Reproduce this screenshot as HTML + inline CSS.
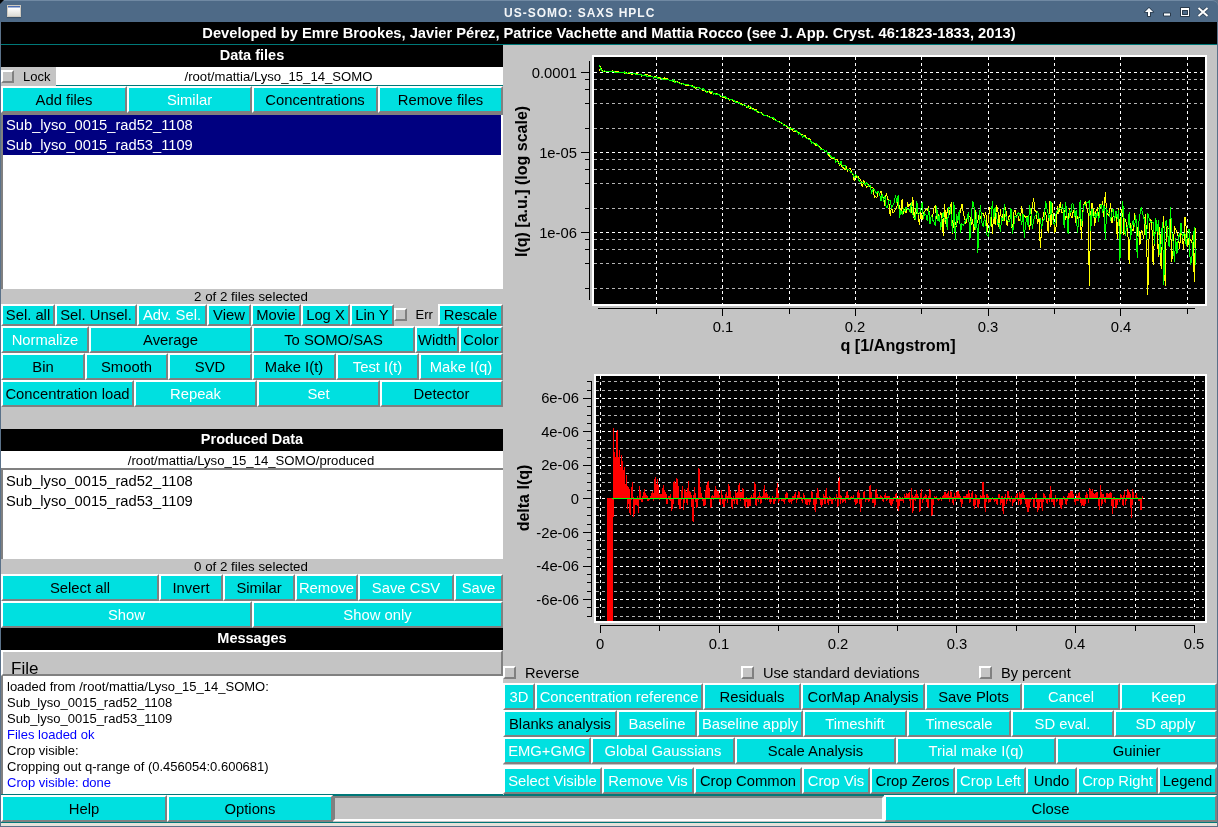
<!DOCTYPE html><html><head><meta charset="utf-8"><style>
*{margin:0;padding:0}
html,body{width:1218px;height:827px;overflow:hidden;background:#c4c4c4}
body{position:relative;font-family:"Liberation Sans",sans-serif}
div,svg{position:absolute}
.t{white-space:nowrap}
.c{white-space:nowrap;text-align:center;overflow:hidden}
.b{background:#00e0e0;border-style:solid;border-width:2px;border-color:#fff #808080 #808080 #fff;text-align:center;white-space:nowrap;overflow:hidden}
.cb{width:9px;height:9px;background:#c4c4c4;border-style:solid;border-width:2px;border-color:#fff #808080 #808080 #fff}
.lst{background:#fff;box-sizing:border-box;border-style:solid;border-width:2px 0 0 2px;border-color:#808080}
.mb{background:#c4c4c4;box-sizing:border-box;border-style:solid;border-width:2px;border-color:#fff #808080 #808080 #fff;overflow:hidden}
.ta{background:#fff;box-sizing:border-box;border-style:solid;border-width:0 0 0 2px;border-color:#808080}
.pb{background:#c4c4c4;box-sizing:border-box;border-style:solid;border-width:2px;border-color:#808080 #fff #fff #808080}
</style></head><body><div id="root" style="left:0;top:0;width:1218px;height:827px;overflow:hidden;will-change:transform;background:#c4c4c4"><div style="left:0px;top:0px;width:1218px;height:827px;background:#5a7189;"></div><div style="left:1px;top:22px;width:1216px;height:804px;background:#c4c4c4;"></div><div style="left:0;top:0;width:1218px;height:22px;background:#4e6a87;border-top:1px solid #7089a3;box-sizing:border-box;border-radius:4px 6px 0 0"></div><div style="left:7px;top:5px;width:14px;height:12px;background:linear-gradient(#4a6cb0 0,#4a6cb0 1px,#ffffff 2px,#f6f6f4 40%,#dcdcd6 100%);border:1px solid #cfcac0;box-sizing:border-box;box-shadow:0 1px 1px rgba(30,40,50,0.35)"></div><div style="left:0;top:0;width:4px;height:4px;background:linear-gradient(135deg,#000 0,#000 45%,transparent 55%)"></div><div class="t" style="left:504px;top:1px;font-size:12px;color:#f4f6f8;font-weight:bold;line-height:24px;letter-spacing:1px">US-SOMO: SAXS HPLC</div><svg style="left:1135px;top:0px" width="80" height="22" viewBox="0 0 80 22">
<g fill="none" stroke="#243240" stroke-width="1" stroke-linejoin="round" opacity="0.85">
<path d="M14 7.3 L18.7 12.2 L15.5 12.2 L15.5 16.5 L12.5 16.5 L12.5 12.2 L9.3 12.2 Z"/>
<rect x="28.5" y="13" width="7" height="3"/>
<path d="M45.5 7.5 H54.5 V16.5 H45.5 Z M47.5 10.5 V14.5 H52.5 V10.5 Z"/>
</g>
<path d="M63.5 8 L72.5 16 M72.5 8 L63.5 16" stroke="#243240" stroke-width="3.4" fill="none" opacity="0.7"/>
<g fill="#ffffff">
<path d="M14 8 L18 12 L15 12 L15 16 L13 16 L13 12 L10 12 Z"/>
<rect x="29" y="13.5" width="6" height="2"/>
<path d="M46 8 H54 V16 H46 Z M47 10 V15 H53 V10 Z" fill-rule="evenodd"/>
<path d="M63.5 8 L72.5 16 M72.5 8 L63.5 16" stroke="#fff" stroke-width="2" fill="none"/>
</g></svg><div style="left:1px;top:22px;width:1216px;height:22px;background:#000;"></div><div class="c" style="left:1px;top:22px;width:1216px;height:22px;line-height:22px;font-size:14.7px;color:#fff;font-weight:bold;">Developed by Emre Brookes, Javier P&eacute;rez, Patrice Vachette and Mattia Rocco (see J. App. Cryst. 46:1823-1833, 2013)</div><div style="left:1px;top:44px;width:1216px;height:1px;background:#007878;"></div><div style="left:1px;top:45px;width:502px;height:22px;background:#000;"></div><div class="c" style="left:1px;top:44px;width:502px;height:22px;line-height:22px;font-size:14.5px;color:#fff;font-weight:bold;">Data files</div><div style="left:56px;top:67px;width:447px;height:18px;background:#fff;"></div><div style="left:56px;top:85px;width:447px;height:1px;background:#007878;"></div><div class="cb" style="left:1px;top:70px"></div><div class="t" style="left:23px;top:67px;font-size:13px;color:#000;line-height:19px">Lock</div><div class="c" style="left:55px;top:68px;width:447px;height:18px;line-height:18px;font-size:13.15px;color:#000;">/root/mattia/Lyso_15_14_SOMO</div><div class="b" style="left:1px;top:86px;width:122px;height:23px;line-height:25px;color:#000000;font-size:14.8px">Add files</div><div class="b" style="left:127px;top:86px;width:121px;height:23px;line-height:25px;color:#ffffff;font-size:14.8px">Similar</div><div class="b" style="left:252px;top:86px;width:122px;height:23px;line-height:25px;color:#000000;font-size:14.8px">Concentrations</div><div class="b" style="left:378px;top:86px;width:121px;height:23px;line-height:25px;color:#000000;font-size:14.8px">Remove files</div><div class="lst" style="left:1px;top:113px;width:502px;height:176px"></div><div style="left:3px;top:115px;width:498px;height:40px;background:#000080;"></div><div class="t" style="left:6px;top:115px;font-size:14.7px;color:#fff;line-height:20px">Sub_lyso_0015_rad52_1108</div><div class="t" style="left:6px;top:135px;font-size:14.7px;color:#fff;line-height:20px">Sub_lyso_0015_rad53_1109</div><div class="c" style="left:0px;top:289px;width:502px;height:15px;line-height:15px;font-size:13.3px;color:#000;">2 of 2 files selected</div><div class="b" style="left:1px;top:304px;width:50px;height:18px;line-height:18px;color:#000000;font-size:14.8px">Sel. all</div><div class="b" style="left:55px;top:304px;width:78px;height:18px;line-height:18px;color:#000000;font-size:14.8px">Sel. Unsel.</div><div class="b" style="left:137px;top:304px;width:66px;height:18px;line-height:18px;color:#ffffff;font-size:14.8px">Adv. Sel.</div><div class="b" style="left:207px;top:304px;width:40px;height:18px;line-height:18px;color:#000000;font-size:14.8px">View</div><div class="b" style="left:251px;top:304px;width:46px;height:18px;line-height:18px;color:#000000;font-size:14.8px">Movie</div><div class="b" style="left:301px;top:304px;width:45px;height:18px;line-height:18px;color:#000000;font-size:14.8px">Log X</div><div class="b" style="left:350px;top:304px;width:40px;height:18px;line-height:18px;color:#000000;font-size:14.8px">Lin Y</div><div class="b" style="left:438px;top:304px;width:61px;height:18px;line-height:18px;color:#000000;font-size:14.8px">Rescale</div><div class="cb" style="left:394px;top:308px"></div><div class="t" style="left:415.5px;top:304px;font-size:13px;color:#000;line-height:22px">Err</div><div class="b" style="left:1px;top:326px;width:84px;height:23px;line-height:25px;color:#ffffff;font-size:14.8px">Normalize</div><div class="b" style="left:89px;top:326px;width:159px;height:23px;line-height:25px;color:#000000;font-size:14.8px">Average</div><div class="b" style="left:252px;top:326px;width:159px;height:23px;line-height:25px;color:#000000;font-size:14.8px">To SOMO/SAS</div><div class="b" style="left:415px;top:326px;width:40px;height:23px;line-height:25px;color:#000000;font-size:14.8px">Width</div><div class="b" style="left:459px;top:326px;width:40px;height:23px;line-height:25px;color:#000000;font-size:14.8px">Color</div><div class="b" style="left:1px;top:353px;width:80px;height:23px;line-height:25px;color:#000000;font-size:14.8px">Bin</div><div class="b" style="left:85px;top:353px;width:79px;height:23px;line-height:25px;color:#000000;font-size:14.8px">Smooth</div><div class="b" style="left:168px;top:353px;width:80px;height:23px;line-height:25px;color:#000000;font-size:14.8px">SVD</div><div class="b" style="left:252px;top:353px;width:80px;height:23px;line-height:25px;color:#000000;font-size:14.8px">Make I(t)</div><div class="b" style="left:336px;top:353px;width:79px;height:23px;line-height:25px;color:#ffffff;font-size:14.8px">Test I(t)</div><div class="b" style="left:419px;top:353px;width:80px;height:23px;line-height:25px;color:#ffffff;font-size:14.8px">Make I(q)</div><div class="b" style="left:1px;top:380px;width:129px;height:23px;line-height:25px;color:#000000;font-size:14.8px">Concentration load</div><div class="b" style="left:134px;top:380px;width:119px;height:23px;line-height:25px;color:#ffffff;font-size:14.8px">Repeak</div><div class="b" style="left:257px;top:380px;width:119px;height:23px;line-height:25px;color:#ffffff;font-size:14.8px">Set</div><div class="b" style="left:380px;top:380px;width:119px;height:23px;line-height:25px;color:#000000;font-size:14.8px">Detector</div><div style="left:1px;top:429px;width:502px;height:22px;background:#000;"></div><div class="c" style="left:1px;top:428px;width:502px;height:22px;line-height:22px;font-size:14.5px;color:#fff;font-weight:bold;">Produced Data</div><div style="left:1px;top:451px;width:502px;height:17px;background:#fff;"></div><div class="c" style="left:0px;top:452px;width:502px;height:17px;line-height:17px;font-size:13.15px;color:#000;">/root/mattia/Lyso_15_14_SOMO/produced</div><div class="lst" style="left:1px;top:468px;width:502px;height:91px"></div><div class="t" style="left:6px;top:471px;font-size:14.7px;color:#000;line-height:20px">Sub_lyso_0015_rad52_1108</div><div class="t" style="left:6px;top:491px;font-size:14.7px;color:#000;line-height:20px">Sub_lyso_0015_rad53_1109</div><div class="c" style="left:0px;top:559px;width:502px;height:15px;line-height:15px;font-size:13.3px;color:#000;">0 of 2 files selected</div><div class="b" style="left:1px;top:574px;width:154px;height:23px;line-height:25px;color:#000000;font-size:14.8px">Select all</div><div class="b" style="left:159px;top:574px;width:60px;height:23px;line-height:25px;color:#000000;font-size:14.8px">Invert</div><div class="b" style="left:223px;top:574px;width:68px;height:23px;line-height:25px;color:#000000;font-size:14.8px">Similar</div><div class="b" style="left:295px;top:574px;width:59px;height:23px;line-height:25px;color:#ffffff;font-size:14.8px">Remove</div><div class="b" style="left:358px;top:574px;width:92px;height:23px;line-height:25px;color:#ffffff;font-size:14.8px">Save CSV</div><div class="b" style="left:454px;top:574px;width:45px;height:23px;line-height:25px;color:#ffffff;font-size:14.8px">Save</div><div class="b" style="left:1px;top:601px;width:247px;height:23px;line-height:25px;color:#ffffff;font-size:14.8px">Show</div><div class="b" style="left:252px;top:601px;width:247px;height:23px;line-height:25px;color:#ffffff;font-size:14.8px">Show only</div><div style="left:1px;top:628px;width:502px;height:22px;background:#000;"></div><div class="c" style="left:1px;top:627px;width:502px;height:22px;line-height:22px;font-size:14.5px;color:#fff;font-weight:bold;">Messages</div><div class="mb" style="left:1px;top:650px;width:502px;height:26px"></div><div class="t" style="left:11px;top:659px;font-size:17px;color:#000;line-height:20px">File</div><div class="ta" style="left:1px;top:676px;width:502px;height:118px"></div><div class="t" style="left:7px;top:679px;font-size:13px;color:#000;line-height:16px">loaded from /root/mattia/Lyso_15_14_SOMO:</div><div class="t" style="left:7px;top:695px;font-size:13px;color:#000;line-height:16px">Sub_lyso_0015_rad52_1108</div><div class="t" style="left:7px;top:711px;font-size:13px;color:#000;line-height:16px">Sub_lyso_0015_rad53_1109</div><div class="t" style="left:7px;top:727px;font-size:13px;color:#0000ff;line-height:16px">Files loaded ok</div><div class="t" style="left:7px;top:743px;font-size:13px;color:#000;line-height:16px">Crop visible:</div><div class="t" style="left:7px;top:759px;font-size:13px;color:#000;line-height:16px">Cropping out q-range of (0.456054:0.600681)</div><div class="t" style="left:7px;top:775px;font-size:13px;color:#0000ff;line-height:16px">Crop visible: done</div><div style="left:1px;top:794px;width:1216px;height:2px;background:#007878;"></div><div class="b" style="left:1px;top:795px;width:162px;height:23px;line-height:25px;color:#000000;font-size:14.8px">Help</div><div class="b" style="left:167px;top:795px;width:162px;height:23px;line-height:25px;color:#000000;font-size:14.8px">Options</div><div class="pb" style="left:333px;top:796px;width:551px;height:25px"></div><div class="b" style="left:884px;top:795px;width:329px;height:23px;line-height:25px;color:#000000;font-size:14.8px">Close</div><div style="left:1px;top:822px;width:1216px;height:1px;background:#007878;"></div><div style="left:1px;top:823px;width:1216px;height:3px;background:#e6e2da;"></div><div style="left:503px;top:45px;width:1px;height:750px;background:#c4c4c4;"></div><div class="cb" style="left:503px;top:666px"></div><div class="t" style="left:525px;top:664px;font-size:14.6px;color:#000;line-height:18px">Reverse</div><div class="cb" style="left:741px;top:666px"></div><div class="t" style="left:763px;top:664px;font-size:14.6px;color:#000;line-height:18px">Use standard deviations</div><div class="cb" style="left:979px;top:666px"></div><div class="t" style="left:1001px;top:664px;font-size:14.6px;color:#000;line-height:18px">By percent</div><div class="b" style="left:503px;top:683px;width:28px;height:23px;line-height:25px;color:#ffffff;font-size:14.8px">3D</div><div class="b" style="left:535px;top:683px;width:164px;height:23px;line-height:25px;color:#ffffff;font-size:14.8px">Concentration reference</div><div class="b" style="left:703px;top:683px;width:94px;height:23px;line-height:25px;color:#000000;font-size:14.8px">Residuals</div><div class="b" style="left:801px;top:683px;width:120px;height:23px;line-height:25px;color:#000000;font-size:14.8px">CorMap Analysis</div><div class="b" style="left:925px;top:683px;width:93px;height:23px;line-height:25px;color:#000000;font-size:14.8px">Save Plots</div><div class="b" style="left:1022px;top:683px;width:94px;height:23px;line-height:25px;color:#ffffff;font-size:14.8px">Cancel</div><div class="b" style="left:1120px;top:683px;width:93px;height:23px;line-height:25px;color:#ffffff;font-size:14.8px">Keep</div><div class="b" style="left:503px;top:710px;width:110px;height:23px;line-height:25px;color:#000000;font-size:14.8px">Blanks analysis</div><div class="b" style="left:617px;top:710px;width:76px;height:23px;line-height:25px;color:#ffffff;font-size:14.8px">Baseline</div><div class="b" style="left:697px;top:710px;width:102px;height:23px;line-height:25px;color:#ffffff;font-size:14.8px">Baseline apply</div><div class="b" style="left:803px;top:710px;width:100px;height:23px;line-height:25px;color:#ffffff;font-size:14.8px">Timeshift</div><div class="b" style="left:907px;top:710px;width:100px;height:23px;line-height:25px;color:#ffffff;font-size:14.8px">Timescale</div><div class="b" style="left:1011px;top:710px;width:99px;height:23px;line-height:25px;color:#ffffff;font-size:14.8px">SD eval.</div><div class="b" style="left:1114px;top:710px;width:99px;height:23px;line-height:25px;color:#ffffff;font-size:14.8px">SD apply</div><div class="b" style="left:503px;top:737px;width:84px;height:23px;line-height:25px;color:#ffffff;font-size:14.8px">EMG+GMG</div><div class="b" style="left:591px;top:737px;width:140px;height:23px;line-height:25px;color:#ffffff;font-size:14.8px">Global Gaussians</div><div class="b" style="left:735px;top:737px;width:157px;height:23px;line-height:25px;color:#000000;font-size:14.8px">Scale Analysis</div><div class="b" style="left:896px;top:737px;width:156px;height:23px;line-height:25px;color:#ffffff;font-size:14.8px">Trial make I(q)</div><div class="b" style="left:1056px;top:737px;width:157px;height:23px;line-height:25px;color:#000000;font-size:14.8px">Guinier</div><div style="left:503px;top:765px;width:714px;height:2px;background:#fff;"></div><div class="b" style="left:503px;top:767px;width:95px;height:23px;line-height:25px;color:#ffffff;font-size:14.8px">Select Visible</div><div class="b" style="left:602px;top:767px;width:88px;height:23px;line-height:25px;color:#ffffff;font-size:14.8px">Remove Vis</div><div class="b" style="left:694px;top:767px;width:104px;height:23px;line-height:25px;color:#000000;font-size:14.8px">Crop Common</div><div class="b" style="left:802px;top:767px;width:64px;height:23px;line-height:25px;color:#ffffff;font-size:14.8px">Crop Vis</div><div class="b" style="left:870px;top:767px;width:81px;height:23px;line-height:25px;color:#000000;font-size:14.8px">Crop Zeros</div><div class="b" style="left:955px;top:767px;width:67px;height:23px;line-height:25px;color:#ffffff;font-size:14.8px">Crop Left</div><div class="b" style="left:1026px;top:767px;width:47px;height:23px;line-height:25px;color:#000000;font-size:14.8px">Undo</div><div class="b" style="left:1077px;top:767px;width:77px;height:23px;line-height:25px;color:#ffffff;font-size:14.8px">Crop Right</div><div class="b" style="left:1158px;top:767px;width:55px;height:23px;line-height:25px;color:#000000;font-size:14.8px">Legend</div><svg style="left:0;top:0" width="1218" height="827" viewBox="0 0 1218 827" shape-rendering="crispEdges"><rect x="593" y="56" width="613" height="249" fill="#000" stroke="#fff" stroke-width="2"/><line x1="656.5" y1="57" x2="656.5" y2="304" stroke="#ffffff" stroke-dasharray="3 3"/><line x1="656.5" y1="308" x2="656.5" y2="314" stroke="#000"/><line x1="722.5" y1="57" x2="722.5" y2="304" stroke="#ffffff" stroke-dasharray="3 3"/><line x1="722.5" y1="308" x2="722.5" y2="316" stroke="#000"/><line x1="789.5" y1="57" x2="789.5" y2="304" stroke="#ffffff" stroke-dasharray="3 3"/><line x1="789.5" y1="308" x2="789.5" y2="314" stroke="#000"/><line x1="855.5" y1="57" x2="855.5" y2="304" stroke="#ffffff" stroke-dasharray="3 3"/><line x1="855.5" y1="308" x2="855.5" y2="316" stroke="#000"/><line x1="921.5" y1="57" x2="921.5" y2="304" stroke="#ffffff" stroke-dasharray="3 3"/><line x1="921.5" y1="308" x2="921.5" y2="314" stroke="#000"/><line x1="988.5" y1="57" x2="988.5" y2="304" stroke="#ffffff" stroke-dasharray="3 3"/><line x1="988.5" y1="308" x2="988.5" y2="316" stroke="#000"/><line x1="1054.5" y1="57" x2="1054.5" y2="304" stroke="#ffffff" stroke-dasharray="3 3"/><line x1="1054.5" y1="308" x2="1054.5" y2="314" stroke="#000"/><line x1="1120.5" y1="57" x2="1120.5" y2="304" stroke="#ffffff" stroke-dasharray="3 3"/><line x1="1120.5" y1="308" x2="1120.5" y2="316" stroke="#000"/><line x1="1187.5" y1="57" x2="1187.5" y2="304" stroke="#ffffff" stroke-dasharray="3 3"/><line x1="1187.5" y1="308" x2="1187.5" y2="314" stroke="#000"/><line x1="594" y1="72.5" x2="1204" y2="72.5" stroke="#ffffff" stroke-dasharray="3 3"/><line x1="581" y1="72.5" x2="589" y2="72.5" stroke="#000"/><line x1="594" y1="79.5" x2="1204" y2="79.5" stroke="#b4b4b4" stroke-dasharray="3 3"/><line x1="585" y1="79.5" x2="589" y2="79.5" stroke="#000"/><line x1="594" y1="89.5" x2="1204" y2="89.5" stroke="#b4b4b4" stroke-dasharray="3 3"/><line x1="585" y1="89.5" x2="589" y2="89.5" stroke="#000"/><line x1="594" y1="103.5" x2="1204" y2="103.5" stroke="#b4b4b4" stroke-dasharray="3 3"/><line x1="585" y1="103.5" x2="589" y2="103.5" stroke="#000"/><line x1="594" y1="128.5" x2="1204" y2="128.5" stroke="#b4b4b4" stroke-dasharray="3 3"/><line x1="585" y1="128.5" x2="589" y2="128.5" stroke="#000"/><line x1="594" y1="152.5" x2="1204" y2="152.5" stroke="#ffffff" stroke-dasharray="3 3"/><line x1="581" y1="152.5" x2="589" y2="152.5" stroke="#000"/><line x1="594" y1="159.5" x2="1204" y2="159.5" stroke="#b4b4b4" stroke-dasharray="3 3"/><line x1="585" y1="159.5" x2="589" y2="159.5" stroke="#000"/><line x1="594" y1="169.5" x2="1204" y2="169.5" stroke="#b4b4b4" stroke-dasharray="3 3"/><line x1="585" y1="169.5" x2="589" y2="169.5" stroke="#000"/><line x1="594" y1="183.5" x2="1204" y2="183.5" stroke="#b4b4b4" stroke-dasharray="3 3"/><line x1="585" y1="183.5" x2="589" y2="183.5" stroke="#000"/><line x1="594" y1="208.5" x2="1204" y2="208.5" stroke="#b4b4b4" stroke-dasharray="3 3"/><line x1="585" y1="208.5" x2="589" y2="208.5" stroke="#000"/><line x1="594" y1="232.5" x2="1204" y2="232.5" stroke="#ffffff" stroke-dasharray="3 3"/><line x1="581" y1="232.5" x2="589" y2="232.5" stroke="#000"/><line x1="594" y1="239.5" x2="1204" y2="239.5" stroke="#b4b4b4" stroke-dasharray="3 3"/><line x1="585" y1="239.5" x2="589" y2="239.5" stroke="#000"/><line x1="594" y1="249.5" x2="1204" y2="249.5" stroke="#b4b4b4" stroke-dasharray="3 3"/><line x1="585" y1="249.5" x2="589" y2="249.5" stroke="#000"/><line x1="594" y1="263.5" x2="1204" y2="263.5" stroke="#b4b4b4" stroke-dasharray="3 3"/><line x1="585" y1="263.5" x2="589" y2="263.5" stroke="#000"/><line x1="594" y1="288.5" x2="1204" y2="288.5" stroke="#b4b4b4" stroke-dasharray="3 3"/><line x1="585" y1="288.5" x2="589" y2="288.5" stroke="#000"/><line x1="589.5" y1="61" x2="589.5" y2="300" stroke="#000"/><line x1="598" y1="308.5" x2="1195" y2="308.5" stroke="#000"/></svg><svg style="left:0;top:0" width="1218" height="827" viewBox="0 0 1218 827" shape-rendering="crispEdges"><rect x="595" y="375" width="611" height="247" fill="#000" stroke="#fff" stroke-width="2"/><line x1="600.5" y1="376" x2="600.5" y2="621" stroke="#ffffff" stroke-dasharray="3 3"/><line x1="600.5" y1="625" x2="600.5" y2="633" stroke="#000"/><line x1="659.5" y1="376" x2="659.5" y2="621" stroke="#ffffff" stroke-dasharray="3 3"/><line x1="659.5" y1="625" x2="659.5" y2="631" stroke="#000"/><line x1="719.5" y1="376" x2="719.5" y2="621" stroke="#ffffff" stroke-dasharray="3 3"/><line x1="719.5" y1="625" x2="719.5" y2="633" stroke="#000"/><line x1="778.5" y1="376" x2="778.5" y2="621" stroke="#ffffff" stroke-dasharray="3 3"/><line x1="778.5" y1="625" x2="778.5" y2="631" stroke="#000"/><line x1="838.5" y1="376" x2="838.5" y2="621" stroke="#ffffff" stroke-dasharray="3 3"/><line x1="838.5" y1="625" x2="838.5" y2="633" stroke="#000"/><line x1="897.5" y1="376" x2="897.5" y2="621" stroke="#ffffff" stroke-dasharray="3 3"/><line x1="897.5" y1="625" x2="897.5" y2="631" stroke="#000"/><line x1="956.5" y1="376" x2="956.5" y2="621" stroke="#ffffff" stroke-dasharray="3 3"/><line x1="956.5" y1="625" x2="956.5" y2="633" stroke="#000"/><line x1="1016.5" y1="376" x2="1016.5" y2="621" stroke="#ffffff" stroke-dasharray="3 3"/><line x1="1016.5" y1="625" x2="1016.5" y2="631" stroke="#000"/><line x1="1075.5" y1="376" x2="1075.5" y2="621" stroke="#ffffff" stroke-dasharray="3 3"/><line x1="1075.5" y1="625" x2="1075.5" y2="633" stroke="#000"/><line x1="1135.5" y1="376" x2="1135.5" y2="621" stroke="#ffffff" stroke-dasharray="3 3"/><line x1="1135.5" y1="625" x2="1135.5" y2="631" stroke="#000"/><line x1="1194.5" y1="376" x2="1194.5" y2="621" stroke="#ffffff" stroke-dasharray="3 3"/><line x1="1194.5" y1="625" x2="1194.5" y2="633" stroke="#000"/><line x1="596" y1="616.5" x2="1204" y2="616.5" stroke="#b4b4b4" stroke-dasharray="3 3"/><line x1="587" y1="616.5" x2="591" y2="616.5" stroke="#000"/><line x1="596" y1="607.5" x2="1204" y2="607.5" stroke="#b4b4b4" stroke-dasharray="3 3"/><line x1="587" y1="607.5" x2="591" y2="607.5" stroke="#000"/><line x1="596" y1="599.5" x2="1204" y2="599.5" stroke="#ffffff" stroke-dasharray="3 3"/><line x1="583" y1="599.5" x2="591" y2="599.5" stroke="#000"/><line x1="596" y1="591.5" x2="1204" y2="591.5" stroke="#b4b4b4" stroke-dasharray="3 3"/><line x1="587" y1="591.5" x2="591" y2="591.5" stroke="#000"/><line x1="596" y1="582.5" x2="1204" y2="582.5" stroke="#b4b4b4" stroke-dasharray="3 3"/><line x1="587" y1="582.5" x2="591" y2="582.5" stroke="#000"/><line x1="596" y1="574.5" x2="1204" y2="574.5" stroke="#b4b4b4" stroke-dasharray="3 3"/><line x1="587" y1="574.5" x2="591" y2="574.5" stroke="#000"/><line x1="596" y1="566.5" x2="1204" y2="566.5" stroke="#ffffff" stroke-dasharray="3 3"/><line x1="583" y1="566.5" x2="591" y2="566.5" stroke="#000"/><line x1="596" y1="557.5" x2="1204" y2="557.5" stroke="#b4b4b4" stroke-dasharray="3 3"/><line x1="587" y1="557.5" x2="591" y2="557.5" stroke="#000"/><line x1="596" y1="549.5" x2="1204" y2="549.5" stroke="#b4b4b4" stroke-dasharray="3 3"/><line x1="587" y1="549.5" x2="591" y2="549.5" stroke="#000"/><line x1="596" y1="540.5" x2="1204" y2="540.5" stroke="#b4b4b4" stroke-dasharray="3 3"/><line x1="587" y1="540.5" x2="591" y2="540.5" stroke="#000"/><line x1="596" y1="532.5" x2="1204" y2="532.5" stroke="#ffffff" stroke-dasharray="3 3"/><line x1="583" y1="532.5" x2="591" y2="532.5" stroke="#000"/><line x1="596" y1="524.5" x2="1204" y2="524.5" stroke="#b4b4b4" stroke-dasharray="3 3"/><line x1="587" y1="524.5" x2="591" y2="524.5" stroke="#000"/><line x1="596" y1="515.5" x2="1204" y2="515.5" stroke="#b4b4b4" stroke-dasharray="3 3"/><line x1="587" y1="515.5" x2="591" y2="515.5" stroke="#000"/><line x1="596" y1="507.5" x2="1204" y2="507.5" stroke="#b4b4b4" stroke-dasharray="3 3"/><line x1="587" y1="507.5" x2="591" y2="507.5" stroke="#000"/><line x1="596" y1="498.5" x2="1204" y2="498.5" stroke="#ffffff" stroke-dasharray="3 3"/><line x1="583" y1="498.5" x2="591" y2="498.5" stroke="#000"/><line x1="596" y1="490.5" x2="1204" y2="490.5" stroke="#b4b4b4" stroke-dasharray="3 3"/><line x1="587" y1="490.5" x2="591" y2="490.5" stroke="#000"/><line x1="596" y1="482.5" x2="1204" y2="482.5" stroke="#b4b4b4" stroke-dasharray="3 3"/><line x1="587" y1="482.5" x2="591" y2="482.5" stroke="#000"/><line x1="596" y1="473.5" x2="1204" y2="473.5" stroke="#b4b4b4" stroke-dasharray="3 3"/><line x1="587" y1="473.5" x2="591" y2="473.5" stroke="#000"/><line x1="596" y1="465.5" x2="1204" y2="465.5" stroke="#ffffff" stroke-dasharray="3 3"/><line x1="583" y1="465.5" x2="591" y2="465.5" stroke="#000"/><line x1="596" y1="457.5" x2="1204" y2="457.5" stroke="#b4b4b4" stroke-dasharray="3 3"/><line x1="587" y1="457.5" x2="591" y2="457.5" stroke="#000"/><line x1="596" y1="448.5" x2="1204" y2="448.5" stroke="#b4b4b4" stroke-dasharray="3 3"/><line x1="587" y1="448.5" x2="591" y2="448.5" stroke="#000"/><line x1="596" y1="440.5" x2="1204" y2="440.5" stroke="#b4b4b4" stroke-dasharray="3 3"/><line x1="587" y1="440.5" x2="591" y2="440.5" stroke="#000"/><line x1="596" y1="431.5" x2="1204" y2="431.5" stroke="#ffffff" stroke-dasharray="3 3"/><line x1="583" y1="431.5" x2="591" y2="431.5" stroke="#000"/><line x1="596" y1="423.5" x2="1204" y2="423.5" stroke="#b4b4b4" stroke-dasharray="3 3"/><line x1="587" y1="423.5" x2="591" y2="423.5" stroke="#000"/><line x1="596" y1="415.5" x2="1204" y2="415.5" stroke="#b4b4b4" stroke-dasharray="3 3"/><line x1="587" y1="415.5" x2="591" y2="415.5" stroke="#000"/><line x1="596" y1="406.5" x2="1204" y2="406.5" stroke="#b4b4b4" stroke-dasharray="3 3"/><line x1="587" y1="406.5" x2="591" y2="406.5" stroke="#000"/><line x1="596" y1="398.5" x2="1204" y2="398.5" stroke="#ffffff" stroke-dasharray="3 3"/><line x1="583" y1="398.5" x2="591" y2="398.5" stroke="#000"/><line x1="596" y1="390.5" x2="1204" y2="390.5" stroke="#b4b4b4" stroke-dasharray="3 3"/><line x1="587" y1="390.5" x2="591" y2="390.5" stroke="#000"/><line x1="596" y1="381.5" x2="1204" y2="381.5" stroke="#b4b4b4" stroke-dasharray="3 3"/><line x1="587" y1="381.5" x2="591" y2="381.5" stroke="#000"/><line x1="591.5" y1="381" x2="591.5" y2="617" stroke="#000"/><line x1="600" y1="625.5" x2="1195" y2="625.5" stroke="#000"/></svg><svg style="left:0;top:0" width="1218" height="827" viewBox="0 0 1218 827" shape-rendering="crispEdges"><defs><clipPath id="c1"><rect x="594" y="57" width="610" height="247"/></clipPath><clipPath id="c2"><rect x="596" y="376" width="608" height="245"/></clipPath></defs><path d="M599.4 71.0 L600.7 67.0 L602.0 70.9 L603.3 71.2 L604.7 71.9 L606.0 72.0 L607.3 71.5 L608.7 71.0 L610.0 71.6 L611.3 71.8 L612.6 71.0 L614.0 71.2 L615.3 71.8 L616.6 71.5 L618.0 71.8 L619.3 72.5 L620.6 72.6 L621.9 72.2 L623.3 72.4 L624.6 73.2 L625.9 72.6 L627.2 73.2 L628.6 73.3 L629.9 72.9 L631.2 74.0 L632.6 74.1 L633.9 73.1 L635.2 74.3 L636.5 73.3 L637.9 74.0 L639.2 74.3 L640.5 74.1 L641.9 76.2 L643.2 75.3 L644.5 75.4 L645.8 74.2 L647.2 74.5 L648.5 75.7 L649.8 75.7 L651.2 76.4 L652.5 76.9 L653.8 77.1 L655.1 76.6 L656.5 77.7 L657.8 77.7 L659.1 77.8 L660.4 78.8 L661.8 78.1 L663.1 79.8 L664.4 78.0 L665.8 78.9 L667.1 78.7 L668.4 79.7 L669.7 80.8 L671.1 79.9 L672.4 80.6 L673.7 81.7 L675.1 82.2 L676.4 81.5 L677.7 82.1 L679.0 82.3 L680.4 83.6 L681.7 83.4 L683.0 83.6 L684.4 84.7 L685.7 85.1 L687.0 85.5 L688.3 85.6 L689.7 85.6 L691.0 85.3 L692.3 85.6 L693.6 86.4 L695.0 88.2 L696.3 87.9 L697.6 87.3 L699.0 87.4 L700.3 88.4 L701.6 89.6 L702.9 90.9 L704.3 90.4 L705.6 91.0 L706.9 91.0 L708.3 91.7 L709.6 91.9 L710.9 93.3 L712.2 92.7 L713.6 93.2 L714.9 93.4 L716.2 93.7 L717.6 94.2 L718.9 94.9 L720.2 95.7 L721.5 96.6 L722.9 97.3 L724.2 97.5 L725.5 98.2 L726.8 98.3 L728.2 98.1 L729.5 100.4 L730.8 99.5 L732.2 100.2 L733.5 101.4 L734.8 101.6 L736.1 101.6 L737.5 101.7 L738.8 102.8 L740.1 103.7 L741.5 103.8 L742.8 105.0 L744.1 104.9 L745.4 105.3 L746.8 107.1 L748.1 105.8 L749.4 108.7 L750.8 107.8 L752.1 109.2 L753.4 108.4 L754.7 110.1 L756.1 109.8 L757.4 111.3 L758.7 112.1 L760.0 113.1 L761.4 112.5 L762.7 114.1 L764.0 115.3 L765.4 115.3 L766.7 115.1 L768.0 116.2 L769.3 116.8 L770.7 117.3 L772.0 118.1 L773.3 119.3 L774.7 119.3 L776.0 120.7 L777.3 121.1 L778.6 121.4 L780.0 121.9 L781.3 123.6 L782.6 123.9 L784.0 124.6 L785.3 125.4 L786.6 126.1 L787.9 127.2 L789.3 128.4 L790.6 127.5 L791.9 129.2 L793.2 131.5 L794.6 131.0 L795.9 131.8 L797.2 131.6 L798.6 132.9 L799.9 133.0 L801.2 134.3 L802.5 134.6 L803.9 136.2 L805.2 135.6 L806.5 138.1 L807.9 138.9 L809.2 138.8 L810.5 139.9 L811.8 142.1 L813.2 143.3 L814.5 143.3 L815.8 145.1 L817.2 145.3 L818.5 146.0 L819.8 147.6 L821.1 148.4 L822.5 149.4 L823.8 149.2 L825.1 152.1 L826.4 151.4 L827.8 153.4 L829.1 155.8 L830.4 157.5 L831.8 158.8 L833.1 157.3 L834.4 158.8 L835.7 159.2 L837.1 159.4 L838.4 161.9 L839.7 165.2 L841.1 164.8 L842.4 167.6 L843.7 168.0 L845.0 169.6 L846.4 166.8 L847.7 170.6 L849.0 168.9 L850.4 168.3 L851.7 172.1 L853.0 175.1 L854.3 180.9 L855.7 175.9 L857.0 177.9 L858.3 176.4 L859.6 178.7 L861.0 180.8 L862.3 187.3 L863.6 181.2 L865.0 182.6 L866.3 187.1 L867.6 186.8 L868.9 184.8 L870.3 187.6 L871.6 187.9 L872.9 187.6 L874.3 197.3 L875.6 196.7 L876.9 197.8 L878.2 191.5 L879.6 193.9 L880.9 190.9 L882.2 196.9 L883.6 197.2 L884.9 205.9 L886.2 193.3 L887.5 197.5 L888.9 203.1 L890.2 215.7 L891.5 206.5 L892.8 212.3 L894.2 212.0 L895.5 208.8 L896.8 207.0 L898.2 200.9 L899.5 207.3 L900.8 213.0 L902.1 198.7 L903.5 214.0 L904.8 209.4 L906.1 212.8 L907.5 203.3 L908.8 206.2 L910.1 203.8 L911.4 212.7 L912.8 196.7 L914.1 219.6 L915.4 208.3 L916.8 213.4 L918.1 213.4 L919.4 225.2 L920.7 212.1 L922.1 219.8 L923.4 213.1 L924.7 211.2 L926.0 209.2 L927.4 209.9 L928.7 207.0 L930.0 222.3 L931.4 215.4 L932.7 216.6 L934.0 207.7 L935.3 205.8 L936.7 219.4 L938.0 213.7 L939.3 218.0 L940.7 211.8 L942.0 218.8 L943.3 235.8 L944.6 204.5 L946.0 224.3 L947.3 208.4 L948.6 217.0 L950.0 209.7 L951.3 202.4 L952.6 234.0 L953.9 215.3 L955.3 224.2 L956.6 226.2 L957.9 216.9 L959.2 216.4 L960.6 210.0 L961.9 203.7 L963.2 212.7 L964.6 217.8 L965.9 223.6 L967.2 217.6 L968.5 216.3 L969.9 216.3 L971.2 225.4 L972.5 218.8 L973.9 231.9 L975.2 210.5 L976.5 224.6 L977.8 221.3 L979.2 213.9 L980.5 217.8 L981.8 214.3 L983.2 213.4 L984.5 216.6 L985.8 212.1 L987.1 232.3 L988.5 217.7 L989.8 207.9 L991.1 209.3 L992.4 234.2 L993.8 210.5 L995.1 224.6 L996.4 206.3 L997.8 208.7 L999.1 228.2 L1000.4 209.3 L1001.7 222.9 L1003.1 212.9 L1004.4 220.6 L1005.7 207.3 L1007.1 226.2 L1008.4 217.6 L1009.7 215.6 L1011.0 211.9 L1012.4 233.9 L1013.7 212.8 L1015.0 210.0 L1016.4 216.9 L1017.7 215.0 L1019.0 220.6 L1020.3 219.2 L1021.7 206.4 L1023.0 215.6 L1024.3 215.2 L1025.6 217.6 L1027.0 216.7 L1028.3 217.9 L1029.6 230.0 L1031.0 215.9 L1032.3 205.9 L1033.6 198.3 L1034.9 210.4 L1036.3 211.5 L1037.6 224.3 L1038.9 215.8 L1040.3 247.8 L1041.6 229.1 L1042.9 217.8 L1044.2 211.2 L1045.6 212.5 L1046.9 220.4 L1048.2 233.1 L1049.6 200.9 L1050.9 226.6 L1052.2 202.7 L1053.5 219.2 L1054.9 233.0 L1056.2 226.2 L1057.5 206.1 L1058.8 213.6 L1060.2 202.2 L1061.5 212.1 L1062.8 213.0 L1064.2 210.9 L1065.5 219.0 L1066.8 215.8 L1068.1 220.4 L1069.5 208.3 L1070.8 216.0 L1072.1 217.8 L1073.5 209.7 L1074.8 213.8 L1076.1 223.7 L1077.4 217.0 L1078.8 219.6 L1080.1 208.7 L1081.4 239.0 L1082.8 211.4 L1084.1 203.7 L1085.4 201.7 L1086.7 206.3 L1088.1 213.7 L1089.4 286.0 L1090.7 213.4 L1092.0 203.4 L1093.4 209.3 L1094.7 226.4 L1096.0 211.4 L1097.4 208.4 L1098.7 216.8 L1100.0 204.0 L1101.3 208.9 L1102.7 201.4 L1104.0 216.6 L1105.3 191.6 L1106.7 213.0 L1108.0 214.5 L1109.3 215.6 L1110.6 202.6 L1112.0 223.4 L1113.3 214.7 L1114.6 216.7 L1116.0 215.3 L1117.3 239.3 L1118.6 207.7 L1119.9 243.0 L1121.3 210.6 L1122.6 208.6 L1123.9 235.3 L1125.2 218.9 L1126.6 223.7 L1127.9 234.5 L1129.2 263.9 L1130.6 223.5 L1131.9 229.5 L1133.2 230.5 L1134.5 214.3 L1135.9 217.3 L1137.2 235.7 L1138.5 222.6 L1139.9 245.3 L1141.2 230.7 L1142.5 232.2 L1143.8 238.5 L1145.2 214.2 L1146.5 231.8 L1147.8 295.0 L1149.2 230.4 L1150.5 219.2 L1151.8 222.8 L1153.1 265.0 L1154.5 235.3 L1155.8 226.6 L1157.1 230.5 L1158.4 257.4 L1159.8 226.9 L1161.1 268.9 L1162.4 237.8 L1163.8 215.8 L1165.1 286.0 L1166.4 224.3 L1167.7 228.1 L1169.1 228.4 L1170.4 219.4 L1171.7 261.8 L1173.1 249.9 L1174.4 227.1 L1175.7 228.9 L1177.0 233.0 L1178.4 236.4 L1179.7 249.2 L1181.0 224.4 L1182.4 238.8 L1183.7 249.5 L1185.0 217.1 L1186.3 228.9 L1187.7 247.2 L1189.0 238.1 L1190.3 239.2 L1191.6 241.8 L1193.0 235.2 L1194.3 282.0 L1195.6 228.0" fill="none" stroke="#ffff00" stroke-width="1" clip-path="url(#c1)"/><path d="M599.4 65.0 L600.7 69.0 L602.0 71.2 L603.3 71.9 L604.7 70.6 L606.0 71.6 L607.3 72.0 L608.7 71.4 L610.0 71.4 L611.3 71.1 L612.6 71.8 L614.0 71.8 L615.3 72.3 L616.6 72.1 L618.0 72.6 L619.3 72.2 L620.6 72.4 L621.9 72.6 L623.3 72.5 L624.6 72.0 L625.9 73.3 L627.2 73.2 L628.6 72.6 L629.9 72.9 L631.2 73.2 L632.6 73.6 L633.9 73.5 L635.2 73.9 L636.5 74.5 L637.9 73.9 L639.2 74.8 L640.5 74.5 L641.9 75.2 L643.2 75.3 L644.5 75.0 L645.8 75.4 L647.2 76.6 L648.5 76.6 L649.8 76.6 L651.2 76.9 L652.5 76.5 L653.8 78.1 L655.1 77.7 L656.5 76.8 L657.8 78.6 L659.1 78.4 L660.4 77.8 L661.8 78.7 L663.1 79.2 L664.4 79.8 L665.8 79.8 L667.1 79.5 L668.4 79.5 L669.7 80.6 L671.1 80.0 L672.4 81.3 L673.7 79.9 L675.1 82.8 L676.4 81.3 L677.7 82.3 L679.0 82.8 L680.4 83.7 L681.7 84.3 L683.0 83.4 L684.4 84.7 L685.7 84.5 L687.0 84.4 L688.3 84.8 L689.7 85.2 L691.0 85.8 L692.3 86.3 L693.6 87.1 L695.0 86.9 L696.3 88.4 L697.6 87.7 L699.0 87.6 L700.3 88.8 L701.6 89.1 L702.9 88.2 L704.3 90.0 L705.6 90.6 L706.9 92.8 L708.3 91.6 L709.6 90.6 L710.9 91.4 L712.2 91.5 L713.6 93.9 L714.9 92.9 L716.2 94.7 L717.6 94.0 L718.9 94.7 L720.2 95.3 L721.5 96.4 L722.9 96.4 L724.2 96.5 L725.5 96.9 L726.8 98.6 L728.2 99.0 L729.5 99.2 L730.8 99.8 L732.2 99.6 L733.5 100.1 L734.8 101.4 L736.1 102.7 L737.5 102.7 L738.8 102.4 L740.1 104.1 L741.5 104.9 L742.8 105.2 L744.1 104.1 L745.4 105.4 L746.8 106.3 L748.1 107.5 L749.4 106.6 L750.8 107.0 L752.1 109.2 L753.4 109.6 L754.7 110.6 L756.1 110.3 L757.4 112.3 L758.7 111.8 L760.0 112.6 L761.4 113.1 L762.7 113.2 L764.0 115.5 L765.4 115.1 L766.7 115.9 L768.0 116.1 L769.3 117.2 L770.7 117.5 L772.0 118.0 L773.3 117.7 L774.7 119.5 L776.0 120.7 L777.3 121.0 L778.6 121.6 L780.0 123.1 L781.3 122.7 L782.6 123.6 L784.0 125.6 L785.3 125.2 L786.6 125.4 L787.9 127.1 L789.3 127.1 L790.6 129.0 L791.9 128.0 L793.2 129.3 L794.6 130.4 L795.9 130.5 L797.2 131.8 L798.6 133.9 L799.9 132.6 L801.2 135.0 L802.5 136.9 L803.9 135.7 L805.2 137.1 L806.5 138.5 L807.9 139.1 L809.2 139.6 L810.5 140.4 L811.8 143.0 L813.2 142.7 L814.5 144.3 L815.8 143.4 L817.2 144.6 L818.5 146.1 L819.8 148.0 L821.1 149.6 L822.5 149.5 L823.8 149.4 L825.1 152.2 L826.4 150.6 L827.8 154.2 L829.1 153.5 L830.4 156.0 L831.8 157.6 L833.1 157.8 L834.4 157.5 L835.7 162.0 L837.1 161.9 L838.4 162.0 L839.7 164.2 L841.1 161.3 L842.4 166.1 L843.7 165.9 L845.0 165.3 L846.4 169.9 L847.7 169.7 L849.0 169.9 L850.4 171.7 L851.7 173.0 L853.0 174.3 L854.3 177.4 L855.7 174.5 L857.0 176.2 L858.3 178.8 L859.6 181.8 L861.0 182.7 L862.3 183.0 L863.6 182.5 L865.0 185.3 L866.3 182.2 L867.6 184.4 L868.9 186.2 L870.3 185.6 L871.6 192.9 L872.9 189.7 L874.3 189.4 L875.6 192.4 L876.9 193.2 L878.2 191.4 L879.6 193.9 L880.9 201.3 L882.2 194.0 L883.6 200.2 L884.9 196.1 L886.2 207.4 L887.5 207.6 L888.9 200.2 L890.2 200.5 L891.5 208.2 L892.8 205.5 L894.2 202.6 L895.5 195.1 L896.8 202.8 L898.2 195.2 L899.5 217.9 L900.8 210.8 L902.1 214.6 L903.5 208.9 L904.8 211.6 L906.1 206.8 L907.5 209.6 L908.8 209.1 L910.1 211.9 L911.4 201.7 L912.8 214.8 L914.1 217.2 L915.4 220.1 L916.8 201.0 L918.1 215.2 L919.4 213.0 L920.7 210.2 L922.1 202.1 L923.4 218.6 L924.7 213.3 L926.0 215.3 L927.4 221.3 L928.7 208.3 L930.0 223.7 L931.4 214.9 L932.7 219.8 L934.0 222.3 L935.3 226.0 L936.7 205.9 L938.0 220.7 L939.3 215.1 L940.7 229.5 L942.0 218.1 L943.3 212.2 L944.6 220.6 L946.0 218.8 L947.3 229.5 L948.6 207.7 L950.0 206.8 L951.3 216.4 L952.6 233.1 L953.9 202.5 L955.3 240.0 L956.6 213.9 L957.9 220.7 L959.2 210.1 L960.6 233.4 L961.9 224.2 L963.2 225.3 L964.6 222.6 L965.9 219.1 L967.2 218.6 L968.5 211.7 L969.9 239.5 L971.2 218.5 L972.5 201.4 L973.9 204.7 L975.2 230.2 L976.5 212.4 L977.8 252.6 L979.2 220.0 L980.5 204.8 L981.8 222.5 L983.2 226.6 L984.5 218.2 L985.8 223.9 L987.1 235.4 L988.5 236.0 L989.8 228.3 L991.1 216.3 L992.4 201.1 L993.8 219.1 L995.1 207.2 L996.4 215.4 L997.8 224.2 L999.1 223.2 L1000.4 231.7 L1001.7 218.1 L1003.1 219.9 L1004.4 204.4 L1005.7 215.4 L1007.1 220.3 L1008.4 221.4 L1009.7 221.9 L1011.0 208.3 L1012.4 233.5 L1013.7 226.9 L1015.0 216.4 L1016.4 217.4 L1017.7 214.0 L1019.0 212.6 L1020.3 216.5 L1021.7 224.9 L1023.0 213.9 L1024.3 237.7 L1025.6 223.9 L1027.0 216.6 L1028.3 226.7 L1029.6 204.9 L1031.0 214.0 L1032.3 228.6 L1033.6 220.0 L1034.9 216.3 L1036.3 214.8 L1037.6 210.9 L1038.9 218.5 L1040.3 218.4 L1041.6 228.7 L1042.9 220.5 L1044.2 219.5 L1045.6 200.8 L1046.9 208.7 L1048.2 213.6 L1049.6 221.1 L1050.9 201.1 L1052.2 216.5 L1053.5 222.8 L1054.9 224.3 L1056.2 212.2 L1057.5 211.3 L1058.8 208.6 L1060.2 209.1 L1061.5 209.0 L1062.8 204.6 L1064.2 228.0 L1065.5 202.3 L1066.8 212.2 L1068.1 234.1 L1069.5 210.0 L1070.8 213.3 L1072.1 203.1 L1073.5 204.7 L1074.8 216.5 L1076.1 210.3 L1077.4 233.1 L1078.8 219.8 L1080.1 200.3 L1081.4 226.2 L1082.8 214.0 L1084.1 204.3 L1085.4 205.5 L1086.7 202.4 L1088.1 202.6 L1089.4 201.2 L1090.7 231.4 L1092.0 209.2 L1093.4 218.0 L1094.7 213.0 L1096.0 217.7 L1097.4 211.2 L1098.7 222.2 L1100.0 206.8 L1101.3 205.1 L1102.7 212.5 L1104.0 205.4 L1105.3 239.7 L1106.7 209.7 L1108.0 211.7 L1109.3 213.6 L1110.6 220.5 L1112.0 211.9 L1113.3 208.7 L1114.6 221.3 L1116.0 211.0 L1117.3 219.2 L1118.6 209.8 L1119.9 260.5 L1121.3 226.8 L1122.6 201.5 L1123.9 216.3 L1125.2 235.8 L1126.6 228.1 L1127.9 225.9 L1129.2 211.9 L1130.6 239.8 L1131.9 225.6 L1133.2 219.9 L1134.5 227.2 L1135.9 214.6 L1137.2 257.8 L1138.5 225.3 L1139.9 214.6 L1141.2 207.4 L1142.5 212.8 L1143.8 217.3 L1145.2 225.1 L1146.5 240.2 L1147.8 212.6 L1149.2 219.3 L1150.5 222.3 L1151.8 221.8 L1153.1 222.6 L1154.5 243.8 L1155.8 217.9 L1157.1 232.1 L1158.4 220.5 L1159.8 254.5 L1161.1 243.6 L1162.4 221.7 L1163.8 285.4 L1165.1 222.4 L1166.4 221.1 L1167.7 233.4 L1169.1 246.9 L1170.4 207.3 L1171.7 230.2 L1173.1 241.6 L1174.4 262.0 L1175.7 238.3 L1177.0 253.5 L1178.4 235.9 L1179.7 236.4 L1181.0 223.2 L1182.4 237.6 L1183.7 233.9 L1185.0 233.7 L1186.3 246.3 L1187.7 232.8 L1189.0 229.0 L1190.3 265.0 L1191.6 262.0 L1193.0 242.5 L1194.3 227.4 L1195.6 264.7" fill="none" stroke="#00ff00" stroke-width="1" clip-path="url(#c1)"/><path d="M607.3 498.5 L607.3 649.7 L608.8 649.7 L609.9 649.7 L611.1 649.7 L612.3 649.7 L613.5 427.9 L614.7 481.7 L615.9 459.9 L617.1 429.6 L618.3 471.6 L619.4 449.8 L620.6 483.4 L621.8 454.8 L623.0 486.7 L624.2 466.6 L625.4 493.5 L626.6 475.0 L627.8 508.6 L628.9 486.7 L630.1 515.3 L631.3 495.1 L632.5 481.7 L633.7 517.0 L634.9 504.9 L636.1 504.7 L637.3 495.9 L638.5 513.0 L639.6 485.7 L640.8 499.8 L642.0 501.6 L643.2 494.9 L644.4 490.7 L645.6 495.5 L646.8 495.5 L648.0 500.4 L649.1 499.2 L650.3 498.6 L651.5 494.7 L652.7 490.9 L653.9 500.7 L655.1 477.3 L656.3 490.9 L657.5 478.7 L658.6 491.0 L659.8 499.9 L661.0 494.3 L662.2 493.8 L663.4 484.6 L664.6 495.7 L665.8 492.4 L667.0 503.8 L668.2 496.7 L669.3 498.4 L670.5 494.0 L671.7 510.6 L672.9 505.9 L674.1 480.6 L675.3 488.1 L676.5 478.9 L677.7 479.7 L678.8 503.7 L680.0 508.9 L681.2 498.0 L682.4 486.1 L683.6 510.3 L684.8 490.2 L686.0 492.2 L687.2 505.2 L688.3 481.5 L689.5 497.4 L690.7 491.7 L691.9 505.5 L693.1 522.0 L694.3 486.7 L695.5 496.8 L696.7 507.7 L697.9 503.9 L699.0 468.3 L700.2 490.2 L701.4 493.9 L702.6 499.4 L703.8 505.1 L705.0 505.7 L706.2 487.3 L707.4 484.2 L708.5 481.2 L709.7 496.0 L710.9 508.2 L712.1 495.1 L713.3 499.5 L714.5 493.6 L715.7 485.7 L716.9 498.6 L718.0 490.9 L719.2 495.9 L720.4 505.3 L721.6 490.4 L722.8 503.8 L724.0 507.3 L725.2 499.8 L726.4 491.7 L727.6 502.5 L728.7 484.5 L729.9 490.9 L731.1 497.9 L732.3 509.3 L733.5 495.9 L734.7 503.5 L735.9 491.4 L737.1 505.3 L738.2 489.1 L739.4 483.5 L740.6 500.8 L741.8 492.7 L743.0 488.5 L744.2 502.0 L745.4 507.5 L746.6 497.0 L747.7 506.3 L748.9 505.9 L750.1 505.8 L751.3 495.0 L752.5 497.9 L753.7 496.7 L754.9 482.2 L756.1 506.2 L757.3 497.7 L758.4 500.1 L759.6 492.2 L760.8 504.3 L762.0 497.2 L763.2 496.7 L764.4 485.5 L765.6 499.6 L766.8 492.4 L767.9 499.7 L769.1 496.4 L770.3 503.8 L771.5 500.0 L772.7 495.9 L773.9 504.2 L775.1 500.8 L776.3 496.1 L777.4 483.2 L778.6 502.7 L779.8 498.3 L781.0 498.7 L782.2 501.0 L783.4 500.7 L784.6 503.1 L785.8 494.0 L787.0 492.7 L788.1 499.5 L789.3 502.4 L790.5 501.2 L791.7 503.1 L792.9 495.8 L794.1 500.1 L795.3 491.8 L796.5 503.2 L797.6 496.7 L798.8 491.1 L800.0 497.9 L801.2 497.6 L802.4 503.0 L803.6 493.5 L804.8 498.9 L806.0 503.5 L807.1 505.0 L808.3 498.2 L809.5 503.6 L810.7 500.7 L811.9 491.4 L813.1 499.0 L814.3 506.6 L815.5 511.5 L816.7 494.8 L817.8 488.0 L819.0 497.5 L820.2 500.7 L821.4 506.8 L822.6 503.0 L823.8 494.5 L825.0 504.4 L826.2 487.6 L827.3 500.7 L828.5 504.6 L829.7 495.7 L830.9 500.3 L832.1 503.9 L833.3 498.4 L834.5 497.6 L835.7 500.6 L836.8 494.3 L838.0 507.1 L839.2 477.1 L840.4 503.7 L841.6 496.2 L842.8 502.1 L844.0 499.3 L845.2 501.7 L846.4 493.6 L847.5 491.8 L848.7 499.8 L849.9 499.8 L851.1 496.6 L852.3 497.6 L853.5 496.2 L854.7 500.7 L855.9 504.2 L857.0 502.6 L858.2 489.7 L859.4 495.3 L860.6 511.8 L861.8 499.0 L863.0 499.1 L864.2 490.9 L865.4 501.7 L866.5 498.8 L867.7 498.8 L868.9 502.3 L870.1 484.6 L871.3 493.9 L872.5 502.2 L873.7 501.0 L874.9 507.1 L876.1 488.8 L877.2 495.2 L878.4 497.4 L879.6 498.0 L880.8 495.5 L882.0 497.1 L883.2 501.5 L884.4 498.0 L885.6 493.1 L886.7 501.0 L887.9 496.3 L889.1 496.3 L890.3 504.6 L891.5 505.1 L892.7 502.8 L893.9 497.2 L895.1 496.9 L896.2 493.2 L897.4 506.5 L898.6 511.0 L899.8 496.1 L901.0 501.2 L902.2 497.9 L903.4 502.7 L904.6 494.3 L905.8 498.6 L906.9 493.6 L908.1 497.3 L909.3 491.6 L910.5 508.2 L911.7 488.0 L912.9 512.9 L914.1 495.9 L915.3 500.8 L916.4 489.7 L917.6 498.1 L918.8 496.2 L920.0 511.8 L921.2 489.0 L922.4 503.3 L923.6 497.5 L924.8 496.2 L925.9 494.7 L927.1 502.4 L928.3 507.7 L929.5 488.7 L930.7 491.4 L931.9 515.9 L933.1 504.0 L934.3 496.6 L935.5 497.2 L936.6 496.7 L937.8 499.9 L939.0 500.2 L940.2 497.2 L941.4 499.7 L942.6 496.7 L943.8 495.4 L945.0 492.0 L946.1 494.0 L947.3 495.8 L948.5 491.3 L949.7 502.4 L950.9 491.0 L952.1 497.7 L953.3 504.6 L954.5 492.6 L955.6 500.8 L956.8 492.3 L958.0 491.5 L959.2 495.0 L960.4 496.3 L961.6 507.0 L962.8 498.4 L964.0 496.0 L965.2 498.4 L966.3 494.6 L967.5 497.0 L968.7 490.0 L969.9 503.1 L971.1 496.0 L972.3 491.5 L973.5 503.9 L974.7 508.9 L975.8 494.5 L977.0 499.8 L978.2 507.8 L979.4 502.8 L980.6 496.3 L981.8 499.2 L983.0 482.2 L984.2 497.3 L985.3 512.3 L986.5 494.6 L987.7 494.4 L988.9 501.8 L990.1 501.3 L991.3 499.0 L992.5 497.7 L993.7 498.9 L994.9 501.2 L996.0 500.2 L997.2 504.9 L998.4 494.6 L999.6 494.9 L1000.8 504.5 L1002.0 495.9 L1003.2 514.2 L1004.4 501.8 L1005.5 494.0 L1006.7 504.3 L1007.9 490.7 L1009.1 496.9 L1010.3 501.8 L1011.5 495.9 L1012.7 503.8 L1013.9 500.7 L1015.0 501.2 L1016.2 494.8 L1017.4 493.6 L1018.6 505.3 L1019.8 492.3 L1021.0 504.6 L1022.2 490.7 L1023.4 492.9 L1024.6 496.9 L1025.7 503.6 L1026.9 506.3 L1028.1 512.2 L1029.3 506.5 L1030.5 499.1 L1031.7 499.1 L1032.9 497.2 L1034.1 507.8 L1035.2 497.1 L1036.4 493.0 L1037.6 511.1 L1038.8 509.0 L1040.0 501.0 L1041.2 501.7 L1042.4 510.5 L1043.6 493.7 L1044.7 495.5 L1045.9 499.6 L1047.1 503.5 L1048.3 499.0 L1049.5 500.8 L1050.7 486.1 L1051.9 501.9 L1053.1 499.1 L1054.3 506.8 L1055.4 494.9 L1056.6 501.2 L1057.8 498.9 L1059.0 498.2 L1060.2 505.9 L1061.4 509.1 L1062.6 500.7 L1063.8 496.6 L1064.9 499.8 L1066.1 504.2 L1067.3 500.1 L1068.5 494.0 L1069.7 494.3 L1070.9 491.1 L1072.1 491.3 L1073.3 495.5 L1074.4 499.4 L1075.6 504.7 L1076.8 494.3 L1078.0 501.4 L1079.2 491.6 L1080.4 499.3 L1081.6 506.1 L1082.8 501.7 L1084.0 505.7 L1085.1 503.4 L1086.3 492.0 L1087.5 495.9 L1088.7 503.4 L1089.9 487.8 L1091.1 497.3 L1092.3 489.2 L1093.5 495.3 L1094.6 494.3 L1095.8 493.7 L1097.0 491.7 L1098.2 499.5 L1099.4 509.6 L1100.6 485.0 L1101.8 505.5 L1103.0 494.5 L1104.1 496.8 L1105.3 503.2 L1106.5 493.7 L1107.7 493.2 L1108.9 495.4 L1110.1 492.5 L1111.3 493.0 L1112.5 514.0 L1113.7 497.7 L1114.8 497.9 L1116.0 508.1 L1117.2 504.1 L1118.4 497.8 L1119.6 502.2 L1120.8 495.1 L1122.0 496.6 L1123.2 506.2 L1124.3 490.9 L1125.5 504.5 L1126.7 497.3 L1127.9 489.6 L1129.1 492.8 L1130.3 494.6 L1131.5 517.7 L1132.7 489.3 L1133.8 498.3 L1135.0 499.1 L1136.2 493.9 L1137.4 498.0 L1138.6 500.5 L1139.8 498.7 L1141.0 510.0 L1142.2 496.1 L1142.2 498.5 Z" fill="#ff0000" stroke="#ff0000" stroke-width="1" clip-path="url(#c2)"/><line x1="612" y1="498.5" x2="1142.2" y2="498.5" stroke="#00ff00" stroke-width="1"/></svg><div class="t" style="left:481px;top:64.0px;width:96px;text-align:right;font-size:14.8px;line-height:18px">0.0001</div><div class="t" style="left:481px;top:144.0px;width:96px;text-align:right;font-size:14.8px;line-height:18px">1e-05</div><div class="t" style="left:481px;top:224.0px;width:96px;text-align:right;font-size:14.8px;line-height:18px">1e-06</div><div class="t" style="left:693px;top:318px;width:60px;text-align:center;font-size:14.8px;line-height:18px">0.1</div><div class="t" style="left:825px;top:318px;width:60px;text-align:center;font-size:14.8px;line-height:18px">0.2</div><div class="t" style="left:958px;top:318px;width:60px;text-align:center;font-size:14.8px;line-height:18px">0.3</div><div class="t" style="left:1091px;top:318px;width:60px;text-align:center;font-size:14.8px;line-height:18px">0.4</div><div class="t" style="left:598px;top:335px;width:600px;text-align:center;font-size:16.2px;font-weight:bold;line-height:20px">q [1/Angstrom]</div><div class="t" style="left:447px;top:172px;width:150px;text-align:center;font-size:16px;font-weight:bold;line-height:20px;transform:rotate(-90deg);transform-origin:75px 10px">I(q) [a.u.] (log scale)</div><div class="t" style="left:481px;top:389.2px;width:98px;text-align:right;font-size:14.8px;line-height:18px">6e-06</div><div class="t" style="left:481px;top:422.8px;width:98px;text-align:right;font-size:14.8px;line-height:18px">4e-06</div><div class="t" style="left:481px;top:456.4px;width:98px;text-align:right;font-size:14.8px;line-height:18px">2e-06</div><div class="t" style="left:481px;top:490.0px;width:98px;text-align:right;font-size:14.8px;line-height:18px">0</div><div class="t" style="left:481px;top:523.6px;width:98px;text-align:right;font-size:14.8px;line-height:18px">-2e-06</div><div class="t" style="left:481px;top:557.2px;width:98px;text-align:right;font-size:14.8px;line-height:18px">-4e-06</div><div class="t" style="left:481px;top:590.8px;width:98px;text-align:right;font-size:14.8px;line-height:18px">-6e-06</div><div class="t" style="left:570px;top:635px;width:60px;text-align:center;font-size:14.8px;line-height:18px">0</div><div class="t" style="left:689px;top:635px;width:60px;text-align:center;font-size:14.8px;line-height:18px">0.1</div><div class="t" style="left:808px;top:635px;width:60px;text-align:center;font-size:14.8px;line-height:18px">0.2</div><div class="t" style="left:927px;top:635px;width:60px;text-align:center;font-size:14.8px;line-height:18px">0.3</div><div class="t" style="left:1045px;top:635px;width:60px;text-align:center;font-size:14.8px;line-height:18px">0.4</div><div class="t" style="left:1164px;top:635px;width:60px;text-align:center;font-size:14.8px;line-height:18px">0.5</div><div class="t" style="left:449px;top:488px;width:150px;text-align:center;font-size:16px;font-weight:bold;line-height:20px;transform:rotate(-90deg);transform-origin:75px 10px">delta I(q)</div></div></body></html>
